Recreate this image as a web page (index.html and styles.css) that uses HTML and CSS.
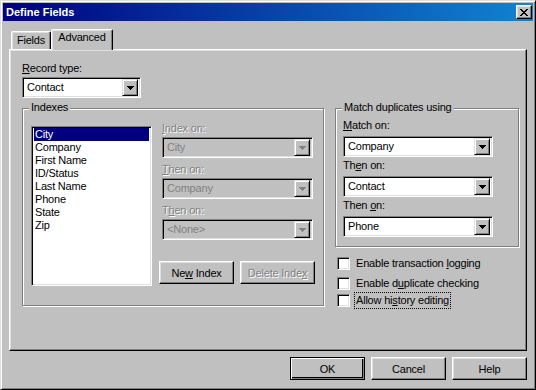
FILE: index.html
```html
<!DOCTYPE html>
<html lang="en">
<head>
    <meta charset="UTF-8">
    <meta name="viewport" content="width=device-width, initial-scale=1.0">
    <title>Define Fields</title>
    <link rel="stylesheet" href="styles.css">
</head>
<body>
    <div class="window">
        <div class="titlebar">
            <span class="title">Define Fields</span>
            <button class="close-btn">
                <svg width="8" height="7" viewBox="0 0 8 7" shape-rendering="crispEdges">
                    <path d="M0 0h2v1h-2zM6 0h2v1h-2zM1 1h2v1h-2zM5 1h2v1h-2zM2 2h4v1h-4zM3 3h2v1h-2zM2 4h4v1h-4zM1 5h2v1h-2zM5 5h2v1h-2zM0 6h2v1h-2zM6 6h2v1h-2z" fill="#000"/>
                </svg>
            </button>
        </div>

        <div class="dialog-body">
            <div class="tabs">
                <div class="tab">Fields</div>
                <div class="tab active">Advanced</div>
            </div>

            <div class="panel">
                <div class="field">
                    <div class="lbl"><u>R</u>ecord type:</div>
                    <div class="combo record-combo">
                        <span class="combo-value">Contact</span>
                        <span class="drop"><svg width="7" height="4" viewBox="0 0 7 4" shape-rendering="crispEdges"><path d="M0 0h7v1h-7zM1 1h5v1h-5zM2 2h3v1h-3zM3 3h1v1h-1z"/></svg></span>
                    </div>
                </div>

                <div class="panel-row">
                    <div class="group indexes">
                        <span class="legend">Indexes</span>
                        <ul class="listbox">
                            <li class="selected">City</li>
                            <li>Company</li>
                            <li>First Name</li>
                            <li>ID/Status</li>
                            <li>Last Name</li>
                            <li>Phone</li>
                            <li>State</li>
                            <li>Zip</li>
                        </ul>
                        <div class="index-col">
                            <div class="lbl disabled"><u>I</u>ndex on:</div>
                            <div class="combo disabled">
                                <span class="combo-value">City</span>
                                <span class="drop"><svg width="7" height="4" viewBox="0 0 7 4" shape-rendering="crispEdges"><path d="M0 0h7v1h-7zM1 1h5v1h-5zM2 2h3v1h-3zM3 3h1v1h-1z"/></svg></span>
                            </div>
                            <div class="lbl disabled"><u>T</u>hen on:</div>
                            <div class="combo disabled">
                                <span class="combo-value">Company</span>
                                <span class="drop"><svg width="7" height="4" viewBox="0 0 7 4" shape-rendering="crispEdges"><path d="M0 0h7v1h-7zM1 1h5v1h-5zM2 2h3v1h-3zM3 3h1v1h-1z"/></svg></span>
                            </div>
                            <div class="lbl disabled">T<u>h</u>en on:</div>
                            <div class="combo disabled">
                                <span class="combo-value">&lt;None&gt;</span>
                                <span class="drop"><svg width="7" height="4" viewBox="0 0 7 4" shape-rendering="crispEdges"><path d="M0 0h7v1h-7zM1 1h5v1h-5zM2 2h3v1h-3zM3 3h1v1h-1z"/></svg></span>
                            </div>
                            <div class="index-buttons">
                                <button class="btn">Ne<u>w</u> Index</button>
                                <button class="btn disabled">Delete Inde<u>x</u></button>
                            </div>
                        </div>
                    </div>

                    <div class="side">
                        <div class="group match">
                            <span class="legend">Match duplicates using</span>
                            <div class="lbl"><u>M</u>atch on:</div>
                            <div class="combo">
                                <span class="combo-value">Company</span>
                                <span class="drop"><svg width="7" height="4" viewBox="0 0 7 4" shape-rendering="crispEdges"><path d="M0 0h7v1h-7zM1 1h5v1h-5zM2 2h3v1h-3zM3 3h1v1h-1z"/></svg></span>
                            </div>
                            <div class="lbl">Th<u>e</u>n on:</div>
                            <div class="combo">
                                <span class="combo-value">Contact</span>
                                <span class="drop"><svg width="7" height="4" viewBox="0 0 7 4" shape-rendering="crispEdges"><path d="M0 0h7v1h-7zM1 1h5v1h-5zM2 2h3v1h-3zM3 3h1v1h-1z"/></svg></span>
                            </div>
                            <div class="lbl">Then <u>o</u>n:</div>
                            <div class="combo">
                                <span class="combo-value">Phone</span>
                                <span class="drop"><svg width="7" height="4" viewBox="0 0 7 4" shape-rendering="crispEdges"><path d="M0 0h7v1h-7zM1 1h5v1h-5zM2 2h3v1h-3zM3 3h1v1h-1z"/></svg></span>
                            </div>
                        </div>

                        <div class="checks">
                            <div class="check"><span class="box"></span><span class="check-text">Enable transaction <u>l</u>ogging</span></div>
                            <div class="check"><span class="box"></span><span class="check-text">Enable d<u>u</u>plicate checking</span></div>
                            <div class="check"><span class="box"></span><span class="check-text focused">Allow hi<u>s</u>tory editing</span></div>
                        </div>
                    </div>
                </div>
            </div>

            <div class="footer">
                <button class="btn default">OK</button>
                <button class="btn">Cancel</button>
                <button class="btn">Help</button>
            </div>
        </div>
    </div>
</body>
</html>
```

FILE: styles.css
```css
* {
    box-sizing: border-box;
}

body {
    margin: 0;
    padding: 0;
    background: #c0c0c0;
    font-family: 'Liberation Sans', Arial, sans-serif;
    font-size: 11px;
    line-height: 13px;
    letter-spacing: -0.2px;
    color: #000;
}

u {
    text-decoration-skip-ink: none;
}

/* window frame */
.window {
    width: 536px;
    height: 390px;
    background: #c0c0c0;
    border: 1px solid;
    border-color: #dfdfdf #000 #000 #dfdfdf;
    box-shadow: inset 1px 1px #fff, inset -1px -1px #808080;
    padding: 2px;
}

.titlebar {
    height: 18px;
    background: linear-gradient(to right, #000080, #1084d0);
    display: flex;
    align-items: center;
    justify-content: space-between;
    padding: 0 1px 0 3px;
}

.title {
    color: #fff;
    font-weight: bold;
    font-size: 11px;
    letter-spacing: 0;
}

.close-btn {
    width: 16px;
    height: 14px;
    padding: 0;
    background: #c0c0c0;
    border: 1px solid;
    border-color: #fff #000 #000 #fff;
    box-shadow: inset -1px -1px #808080, inset 1px 1px #dfdfdf;
    display: flex;
    align-items: center;
    justify-content: center;
}

.dialog-body {
    padding: 8px 6px 7px 6px;
}

/* tabs */
.tabs {
    display: flex;
    align-items: flex-end;
    height: 20px;
    padding-left: 2px;
}

.tab {
    height: 18px;
    width: 40px;
    padding-top: 2px;
    text-align: center;
    border-top: 1px solid #fff;
    border-left: 1px solid #fff;
    border-right: 1px solid #000;
    border-radius: 2px 2px 0 0;
    box-shadow: inset -1px 0 #808080, inset 1px 1px #dfdfdf;
    background: #c0c0c0;
}

.tab.active {
    position: relative;
    z-index: 1;
    width: 62px;
    height: 21px;
    padding-top: 1px;
    margin-bottom: -1px;
}

.panel {
    height: 302px;
    border: 1px solid;
    border-color: #fff #000 #000 #fff;
    box-shadow: inset -1px -1px #808080, inset 1px 1px #dfdfdf;
    padding: 12px 0 0 12px;
}

/* labels & combos */
.lbl {
    height: 13px;
    white-space: nowrap;
}

.lbl.disabled {
    color: #808080;
    text-shadow: 1px 1px #fff;
}

.field .lbl {
    margin-bottom: 2px;
}

.combo {
    width: 150px;
    height: 21px;
    display: flex;
    align-items: center;
    background: #fff;
    border: 1px solid;
    border-color: #808080 #fff #fff #808080;
    box-shadow: inset 1px 1px #000, inset -1px -1px #dfdfdf;
    padding: 2px;
}

.record-combo {
    width: 119px;
}

.combo-value {
    flex: 1;
    padding-left: 2px;
    white-space: nowrap;
}

.combo.disabled {
    background: #c0c0c0;
    color: #808080;
}

.drop {
    width: 16px;
    height: 17px;
    display: flex;
    align-items: center;
    justify-content: center;
    background: #c0c0c0;
    border: 1px solid;
    border-color: #dfdfdf #000 #000 #dfdfdf;
    box-shadow: inset 1px 1px #fff, inset -1px -1px #808080;
    fill: #000;
}

.combo.disabled .drop {
    fill: #808080;
}

/* group boxes */
.panel-row {
    display: flex;
    align-items: flex-start;
    margin-top: 10px;
}

.group {
    position: relative;
    border: 1px solid #808080;
    box-shadow: inset 1px 1px #fff, 1px 1px #fff;
}

.legend {
    position: absolute;
    top: -8px;
    left: 6px;
    padding: 0 2px;
    background: #c0c0c0;
    white-space: nowrap;
}

.indexes {
    width: 302px;
    height: 198px;
    display: flex;
    align-items: flex-start;
    padding: 13px 0 0 8px;
}

.listbox {
    list-style: none;
    margin: 4px 0 0 0;
    width: 121px;
    height: 160px;
    background: #fff;
    border: 1px solid;
    border-color: #808080 #fff #fff #808080;
    box-shadow: inset 1px 1px #000, inset -1px -1px #dfdfdf;
    padding: 1px 1px;
}

.listbox li {
    height: 13px;
    margin: 0 1px 0 1px;
    padding-left: 1px;
}

.listbox li.selected {
    background: #000080;
    color: #fff;
}

.index-col {
    width: 156px;
    margin-left: 7px;
}

.index-col .lbl,
.index-col .combo {
    margin-left: 3px;
}

.index-col .lbl {
    margin-bottom: 2px;
}

.index-col .combo {
    width: 151px;
    margin-bottom: 5px;
}

.index-col .combo:nth-of-type(3) {
    margin-bottom: 0;
}

.index-buttons {
    display: flex;
    gap: 6px;
    margin-top: 21px;
}

/* buttons */
.btn {
    width: 75px;
    height: 23px;
    padding: 0;
    font-family: inherit;
    font-size: 11px;
    letter-spacing: inherit;
    color: #000;
    background: #c0c0c0;
    border: 1px solid;
    border-color: #fff #000 #000 #fff;
    box-shadow: inset -1px -1px #808080, inset 1px 1px #dfdfdf;
}

.btn.disabled {
    color: #808080;
    text-shadow: 1px 1px #fff;
}

.btn.default {
    border: 1px solid #000;
    box-shadow: inset 1px 1px #fff, inset -1px -1px #808080, inset -2px -2px #000;
}

/* right side */
.side {
    width: 184px;
    margin-left: 11px;
}

.match {
    height: 139px;
    padding: 10px 0 0 7px;
}

.match .lbl {
    margin-bottom: 4px;
}

.match .combo {
    margin-bottom: 2px;
}

.checks {
    margin-top: 10px;
    padding-left: 2px;
}

.check {
    display: flex;
    align-items: center;
    height: 13px;
    margin-bottom: 7px;
}

.check:nth-child(2) {
    margin-bottom: 4px;
}

.box {
    width: 13px;
    height: 13px;
    background: #fff;
    border: 1px solid;
    border-color: #808080 #fff #fff #808080;
    box-shadow: inset 1px 1px #000, inset -1px -1px #dfdfdf;
    margin-right: 4px;
}

.check-text {
    border: 1px dotted transparent;
    padding: 1px;
    white-space: nowrap;
}

.check-text.focused {
    border-color: #000;
}

.footer {
    display: flex;
    justify-content: flex-end;
    gap: 6px;
    margin-top: 6px;
}
```
